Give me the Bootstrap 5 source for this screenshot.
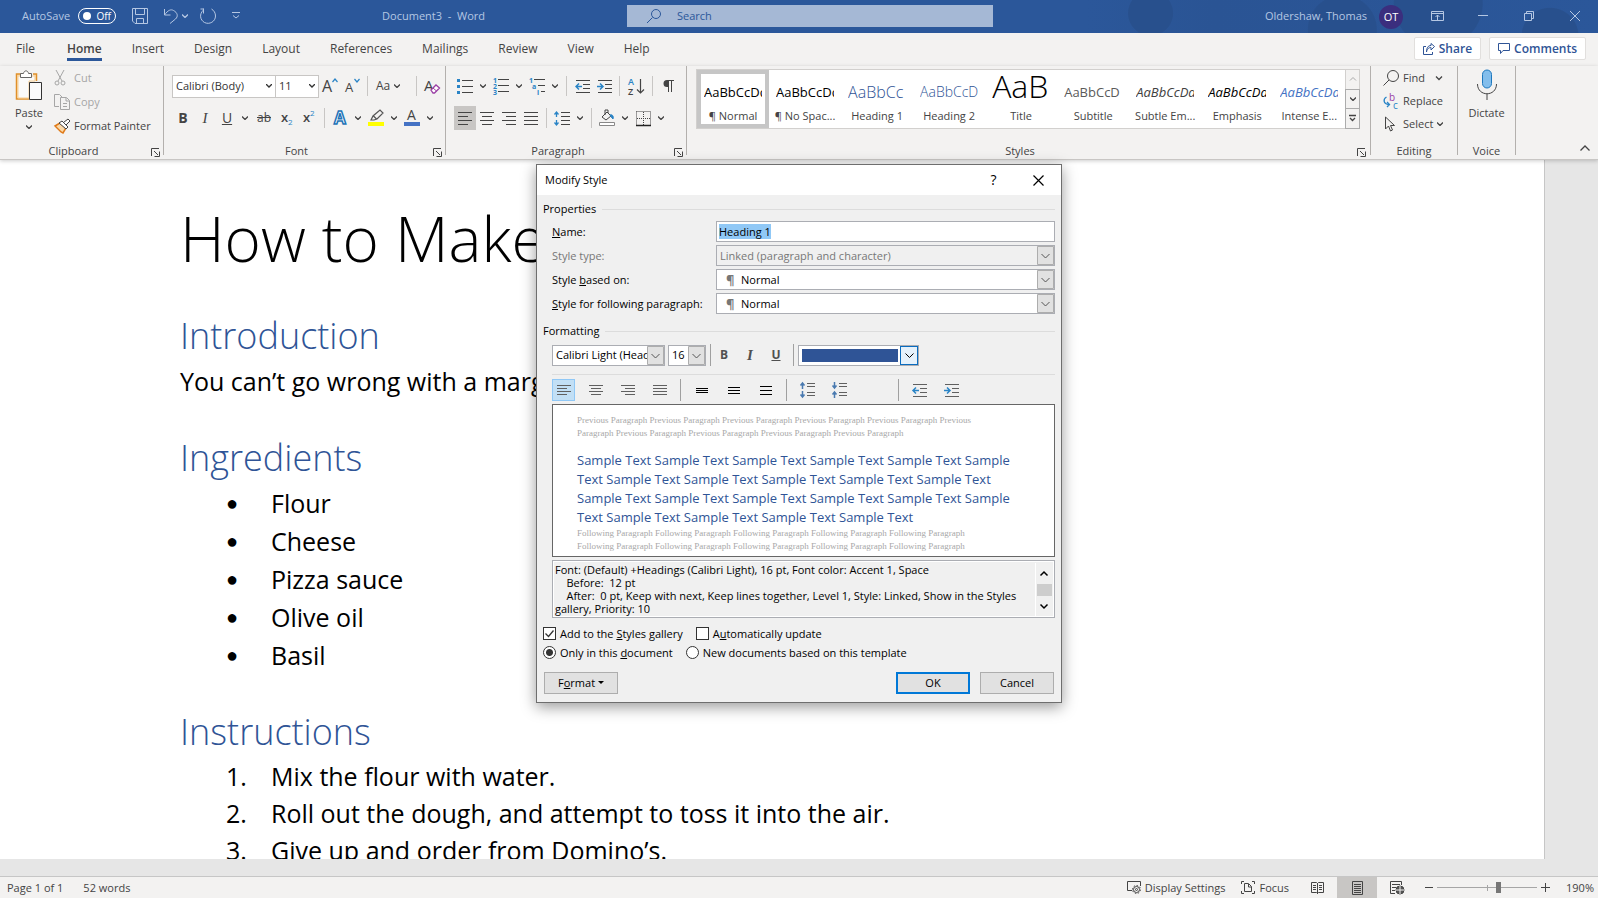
<!DOCTYPE html>
<html lang="en">
<head>
<meta charset="utf-8">
<meta name="viewport" content="width=device-width, initial-scale=1">
<title>Document3 - Word</title>
<link href="https://cdn.jsdelivr.net/npm/bootstrap@5.3.0/dist/css/bootstrap.min.css" rel="stylesheet">
<style>
:root{--ui:"Open Sans","Noto Sans",sans-serif;--ink:#444;--word:#2b579a;--accent:#2f5496}
body{font-family:var(--ui);font-size:11px;line-height:16px;color:var(--ink);background:#e6e6e6;overflow:hidden}
svg{display:block;flex:none;overflow:visible}
button,select,input{font-family:inherit;font-size:inherit;line-height:inherit;color:inherit}
button{border:0;background:none;padding:0}
svg text{font-family:var(--ui)}
.ln{fill:none;stroke:currentColor}
/* title bar */
.titlebar{height:33px;padding-bottom:2px;color:#b5c7e3;background:
 radial-gradient(circle at 72% 40%,#28508d 0 22px,transparent 23px),
 radial-gradient(circle at 84% 90%,#28508d 0 34px,transparent 35px),
 radial-gradient(circle at 90% 10%,#28508d 0 44px,transparent 45px),
 radial-gradient(circle at 97% 110%,#28508d 0 28px,transparent 29px),
 linear-gradient(90deg,#2b579a 68%,#2a5494 76%,#2b579a)}
.side{flex:1 1 0}
.side.lead-side{flex-basis:20px;padding-left:22px}
.toggle{width:38px;height:16px;border:1px solid #fff;border-radius:8px;color:#fff;font-size:10px;line-height:14px}
.toggle i{width:8px;height:8px;border-radius:50%;background:#fff}
.search{width:366px;height:22px;background:#a5b8d5;color:#2b579a}
.search input{background:none;border:0;outline:0;color:#2b579a}
.search input::placeholder{color:#2b579a;opacity:1}
.avatar{width:24px;height:24px;border-radius:50%;background:#3b2e7e;color:#fff;margin:2px 11px 0 0}
.winbtn{width:46px;height:30px}
/* tabs */
.tabs{height:33px;background:#f3f2f1;font-size:12px}
.tabset{gap:30px}
.tabs a{color:var(--ink);text-decoration:none;height:28px;line-height:31px;border-bottom:3px solid transparent}
.tabs a:first-child{padding-right:2px}
.tabs a.on{font-weight:600;border-color:var(--word)}
.pill{height:23px;background:#fff;border:1px solid #e1dfdd;border-radius:2px;color:var(--accent);font-weight:600;padding:0 8px}
/* ribbon */
.ribbon{height:94px;background:#f3f2f1;border-bottom:1px solid #c8c6c4;box-shadow:0 1px 4px rgba(0,0,0,.2);position:relative}
.grp{border-right:1px solid #b3b0ad;height:89px;flex:none}
.g-clip{width:164px}.g-font{width:282px}.g-para{width:241px}.g-edit{width:87px}.g-voice{width:58px}
.g-styles{flex:1 1 0;padding:3px 10px 0 9px;min-width:0}
.cap{height:16px;margin-top:auto;margin-bottom:-4px}
.cap .launch{position:absolute;right:3px;top:5px}
.g-styles .launch{right:-6px}
.ib{height:24px;width:22px;display:flex;align-items:center;justify-content:center}
.ib.wide{width:24px;font-size:12px}
.ib.pressed{background:#c8c6c4}
.ib.bigt{font-size:14px}
.slant{font-family:"Liberation Serif",serif;font-style:italic;font-size:15px}
.cv{width:14px;height:24px;display:flex;align-items:center;justify-content:center}
.vs{width:1px;height:20px;background:#c8c6c4;margin:0 4px}
.combo{height:23px;border:1px solid #c8c6c4;border-radius:0;background:#fff url("data:image/svg+xml,%3Csvg xmlns='http://www.w3.org/2000/svg' width='6' height='4'%3E%3Cpath d='M0 0l3 3 3-3' fill='none' stroke='%23333' stroke-width='1.3'/%3E%3C/svg%3E") no-repeat right 3px center;appearance:none;padding:0 3px;color:#333}
.c-face{width:104px}.c-size{width:44px;margin-left:-1px}
.gallery{height:60px;background:#fff;border:1px solid #d2d0ce;border-right:0;min-width:0}
.sty{flex:1 1 0;min-width:0;height:58px;padding:0 3px;border:4px solid transparent;display:block;text-align:center;white-space:nowrap}
.sty.on{border-color:#c6c6c6}
.sty b{display:block;font-weight:400;height:28px;line-height:34px;overflow:hidden;color:#000;font-size:13px;text-align:left}
.sty span{display:block;margin:5px -5px 0}
.sty .h1s{color:var(--accent);font-size:16px;font-weight:300}
.sty .h2s{color:var(--accent);font-size:14px;font-weight:300}
.sty .ttl{font-size:32px;font-weight:300;line-height:22px}
.sty .subt{color:#5a5a5a}
.sty .sube{color:#404040}
.sty .inte{color:#4472c4}
.gscroll{width:15px}
.gscroll button{flex:1;border:1px solid #acacac;margin-top:-1px;display:flex;align-items:center;justify-content:center}
.gscroll button:first-child{border-color:#d2d0ce;color:#aaa;margin-top:0}
.row24{height:24px}.row23{height:23px}
.rowgap{margin-top:8px}
.paste{width:26px}
.mic{margin:3px 0 4px}
.tail{width:82px;flex:none}
.dim{color:#a6a6a6}
/* document */
.canvas{flex:1;min-height:0;margin-bottom:17px;overflow:hidden}
.sheet{background:#fff;border-right:1px solid #c6c6c6;margin-right:53px;height:100%;overflow:hidden;padding:40px 40px 0 180px;color:#000;font-size:25px}
.sheet h1{font-size:62px;line-height:76px;font-weight:300;margin:0}
.sheet h2{font-size:36px;line-height:48px;font-weight:300;color:var(--accent);margin:34px 0 0}
.sheet h1+h2{margin-top:36px}
.sheet p{line-height:38px;margin:2px 0 0;white-space:nowrap}
.sheet ul,.sheet ol{list-style:none;padding:0 0 0 46px;margin:2px 0 0;line-height:38px}
.sheet li{display:flex}
.sheet li::before{width:45px;flex:none}
.sheet ul li::before{content:"●";font-size:20px}
.sheet ol{counter-reset:n;line-height:37px}
.sheet ol li::before{counter-increment:n;content:counter(n) "."}
/* status bar */
.status{height:22px;background:#f3f2f1;border-top:1px solid #c6c6c6;padding-left:7px}
.view{width:40px;height:21px;display:flex;align-items:center;justify-content:center}
.view.on{background:#c8c6c4}
.zoom{appearance:none;width:100px;height:14px;background:linear-gradient(#a6a6a6,#a6a6a6) center/100% 1px no-repeat,linear-gradient(#a6a6a6,#a6a6a6) center/1px 6px no-repeat}
.zoom::-webkit-slider-thumb{appearance:none;width:5px;height:11px;background:#777}
/* dialog */
.dlg{position:absolute;top:164px;left:0;right:0;margin:0 auto;width:526px;border:1px solid #6e6e6e;background:#f0f0f0;color:#000;box-shadow:0 4px 14px rgba(0,0,0,.4)}
.dlg-head{height:30px;background:#fff;padding-left:8px}
.dlg-head .hb{width:45px;height:28px;display:flex;align-items:center;justify-content:center;font-size:14px}
.dlg-body{padding:5px 6px 8px}
.sect{height:18px;margin-bottom:3px}
.sect::after{content:"";flex:1;height:1px;background:#dcdcdc;margin-left:6px}
.inset{padding-left:9px}
.frow{height:21px;margin-bottom:3px}
.frow label{width:164px;white-space:nowrap}
.frow .off{color:#777}
.fld{height:21px;border:1px solid #abadb3;border-radius:0;background:#fff;padding:0 2px;width:100%;outline:0}
.fld::selection{background:#90c8f6;color:#000}
.sel{appearance:none;height:21px;width:100%;border:1px solid #abadb3;border-radius:0;padding:0 17px 0 3px;background:#fff url("data:image/svg+xml,%3Csvg xmlns='http://www.w3.org/2000/svg' width='17' height='19'%3E%3Cpath d='M.5.5h16v18H.5z' fill='%23e1e1e1' stroke='%23adadad'/%3E%3Cpath d='M4.500 8l4 4 4-4' fill='none' stroke='%23555'/%3E%3C/svg%3E") no-repeat right center}
.sel:disabled{background-color:#f0f0f0;color:#777;opacity:1}
.sel.para{padding-left:24px}
.pil{position:absolute;left:10px;top:3px;color:#777;font-size:13px;font-weight:700;pointer-events:none}
.s-face{width:113px;margin-right:3px}.s-size{width:38px}
.cbox{width:121px;height:21px;border:1px solid #abadb3;background:#fff;padding:3px 0 3px 3px;display:flex}
.cbox i{width:96px;background:#2f5496}
.cbox u{width:18px;margin:-3px 0 -3px auto;border:1px solid #0a6cbf;background:#e5f1fb;display:flex;align-items:center;justify-content:center}
.ds{width:1px;height:22px;background:#a0a0a0}
.db{width:23px;height:22px;display:flex;align-items:center;justify-content:center;color:#606060}
.db.tx{width:26px;font-size:12px;font-weight:700;color:#505050}
.db.tx.slant{font-size:15px}
.db.on{background:#c2dff5;border:1px solid #90c8f6}
.parow{gap:9px;margin-bottom:3px}
.farsep{margin-left:38px}
.rule{height:1px;background:#dcdcdc}
.prev{height:153px;border:1px solid #666;background:#fff;overflow:hidden;padding:9px 24px 0}
.prev div{white-space:nowrap}
.ghost{font:9px/13px "Liberation Serif",serif;color:#a8a8a8}
.samp{font-size:13px;line-height:19px;padding-top:11px;color:var(--accent)}
.desc{height:58px;margin-top:3px;border:1px solid #abadb3;box-shadow:inset 0 0 0 1px #fff;line-height:13px;padding:2px 2px 0 2px;white-space:pre}
.sbar{width:17px;border-left:1px solid #fff}
.sbar i{width:15px;height:17px;background:#cdcdcd}
.chk{appearance:none;width:13px;height:13px;border:1px solid #333;background:#fff;margin:0 4px 0 0;flex:none}
.chk:checked{background:#fff url("data:image/svg+xml,%3Csvg xmlns='http://www.w3.org/2000/svg' width='11' height='11'%3E%3Cpath d='M1.500 5.500l3 3 5-6' fill='none' stroke='%23333' stroke-width='1.300'/%3E%3C/svg%3E")}
.chk.rd{border-radius:50%}
.chk.rd:checked{background:radial-gradient(circle,#333 0 3px,#fff 4px)}
.opts{margin:6px 0}
.opt{height:19px;margin-right:13px}
.acts{padding:4px 1px 0;gap:10px}
.pb{height:22px;width:74px;background:#e1e1e1;border:1px solid #adadad}
.pb.main{border:2px solid #0078d7}
</style>
</head>
<body>
<svg width="0" height="0" class="position-absolute" aria-hidden="true">
<symbol id="cv" viewBox="0 0 6 4"><path class="ln" d="M0 .5l3 3 3-3" stroke-width="1.300"/></symbol>
<symbol id="launch" viewBox="0 0 9 9"><path class="ln" d="M.5 8V.5H8M3 3l4 4M8.500 3.500v5h-5" /></symbol>
<symbol id="al" viewBox="0 0 14 13"><path class="ln" d="M0 .5h14M0 4.500h10M0 8.500h14M0 12.500h10"/></symbol>
<symbol id="ac" viewBox="0 0 14 13"><path class="ln" d="M0 .5h14M2 4.500h10M0 8.500h14M2 12.500h10"/></symbol>
<symbol id="ar" viewBox="0 0 14 13"><path class="ln" d="M0 .5h14M4 4.500h10M0 8.500h14M4 12.500h10"/></symbol>
<symbol id="aj" viewBox="0 0 14 13"><path class="ln" d="M0 .5h14M0 4.500h14M0 8.500h14M0 12.500h14"/></symbol>
<symbol id="outd" viewBox="0 0 15 13"><path class="ln" d="M1 .5h14M8 4.500h7M8 8.500h7M1 12.500h14"/><path d="M7 6.500H1.500M4 3.500l-3 3 3 3" fill="none" stroke="#2a84c6" stroke-width="1.500"/></symbol>
<symbol id="ind" viewBox="0 0 15 13"><path class="ln" d="M1 .5h14M8 4.500h7M8 8.500h7M1 12.500h14"/><path d="M0 6.500h5.500M3 3.500l3 3-3 3" fill="none" stroke="#2a84c6" stroke-width="1.500"/></symbol>
</svg>
<div class="d-flex flex-column vh-100">
<header class="titlebar d-flex align-items-center">
 <div class="side lead-side d-flex align-items-center">
  <span class="me-2">AutoSave</span>
  <button class="toggle d-flex align-items-center justify-content-between px-1"><i></i>Off</button>
  <button class="ms-3" aria-label="Save"><svg width="16" height="16"><path class="ln" d="M.5.5h15v15H3L.5 13zM3.500.5v6h9v-6M4.500 15.500v-5h7v5"/></svg></button>
  <button class="ms-3" aria-label="Undo"><svg width="14" height="16"><path class="ln" d="M.5 1v6h6M.5 7C4 2 7 1 9.500 2.500c4 2 5 6 2 8.500L6 15.500"/></svg></button>
  <svg class="ms-1" width="6" height="4"><use href="#cv"/></svg>
  <button class="ms-2 ps-1" aria-label="Redo"><svg width="16" height="16"><path class="ln" d="M3.500 1h-3M3.500.5v5M3.500 2C-1 6 0 12 4.500 14.500c5 2.500 11-1 11-6.500 0-3-1.500-5.500-4-7"/></svg></button>
  <svg class="ms-3" width="8" height="7"><path class="ln" d="M0 .5h8M1 3.500l3 2.500 3-2.500"/></svg>
  <span class="mx-auto ps-4">Document3&nbsp; -&nbsp; Word</span><span class="ps-4"></span>
 </div>
 <label class="search d-flex align-items-center ps-3 gap-3"><svg class="ms-1" width="14" height="14"><circle class="ln" cx="9" cy="5" r="4.500"/><path class="ln" d="M5.500 8.500L0 14"/></svg><input class="flex-grow-1 p-0" type="search" placeholder="Search"></label>
 <div class="side d-flex align-items-center justify-content-end">
  <span class="me-2 pe-1">Oldershaw, Thomas</span>
  <span class="avatar d-flex align-items-center justify-content-center">OT</span>
  <button class="winbtn d-flex align-items-center justify-content-center" aria-label="Ribbon display"><svg width="13" height="10"><path class="ln" d="M.5.5h12v9H.5zM.5 2.500h12M6.500 9V4M4.500 6l2-2 2 2"/></svg></button>
  <button class="winbtn d-flex align-items-center justify-content-center" aria-label="Minimize"><svg width="10" height="1"><path class="ln" d="M0 .5h10"/></svg></button>
  <button class="winbtn d-flex align-items-center justify-content-center" aria-label="Restore"><svg width="10" height="10"><path class="ln" d="M.5 2.500h7v7h-7zM2.500 2.500v-2h7v7h-2"/></svg></button>
  <button class="winbtn d-flex align-items-center justify-content-center" aria-label="Close"><svg width="10" height="10"><path class="ln" d="M0 0l10 10M10 0L0 10"/></svg></button>
 </div>
</header>
<nav class="tabs d-flex align-items-start ps-3 pe-2">
 <div class="tabset d-flex">
 <a href="#">File</a><a href="#" class="on">Home</a><a href="#">Insert</a><a href="#">Design</a><a href="#">Layout</a><a href="#">References</a><a href="#">Mailings</a><a href="#">Review</a><a href="#">View</a><a href="#">Help</a>
 </div>
 <div class="ms-auto d-flex gap-2 pt-1 pe-1">
  <button class="pill d-flex align-items-center gap-1"><svg width="12" height="12"><path class="ln" d="M3 3.500H.5v8h9V9M3.500 9C4 5.500 6 4.500 8 4.500V7l3.500-3.500L8 .5v2C5 2.500 3.500 5 3.500 9z"/></svg>Share</button>
  <button class="pill d-flex align-items-center gap-1"><svg width="12" height="11"><path class="ln" d="M.5.5h11v7H5l-2.500 3v-3h-2z"/></svg>Comments</button>
 </div>
</nav>
<section class="ribbon d-flex">
 <div class="grp g-clip d-flex flex-column">
  <div class="d-flex ps-3">
   <button class="paste d-flex flex-column align-items-center me-2"><svg class="mt-1" width="28" height="31"><path d="M8 4H1.500v25H14M21 4h-1M18 4h3.500v7" fill="#fbe3bd" stroke="#e0902a" stroke-width="1.500"/><path d="M3 6h17v5h-6v17H3z" fill="#fafafa" stroke="#f7cf94"/><path d="M5.500 7.500v-4h3C9 0 13 0 13.500 3.500h3v4z" fill="#fff" stroke="#666"/><path d="M14.500 12.500h12v17h-12z" fill="#fafafa" stroke="#333"/></svg><span class="mt-1">Paste</span><svg class="mt-1" width="6" height="4"><use href="#cv"/></svg></button>
   <div class="ms-1">
    <button class="row24 d-flex align-items-center dim"><svg width="12" height="16"><path class="ln" d="M2 0l6 11M10 0L4 11"/><circle class="ln" cx="3" cy="13" r="2"/><circle class="ln" cx="9" cy="13" r="2"/></svg><span class="ps-1 ms-1">Cut</span></button>
    <button class="row24 d-flex align-items-center dim"><svg class="me-1" width="16" height="16"><path class="ln" d="M5 12.500H.5V.5h5l3 3M6.500 3.500h6l3 3v9h-9zM12 4v3h3M9 9.500h4M9 12.500h4"/></svg>Copy</button>
    <button class="row24 d-flex align-items-center text-nowrap"><svg class="me-1" width="16" height="15"><path d="M1 7l5-3 6 5-3 5-2-1z" fill="#fbd9a8" stroke="#e07b1a" stroke-width="1.500"/><path d="M5 4l3-2 6 6-2 2zM9.500 3.500L14 0l2 2-4 4" fill="#fff" stroke="#444"/></svg>Format Painter</button>
   </div>
  </div>
  <div class="cap position-relative text-center pe-3">Clipboard<svg class="launch" width="9" height="9"><use href="#launch"/></svg></div>
 </div>
 <div class="grp g-font d-flex flex-column ps-2">
  <div class="d-flex align-items-center rowgap">
   <select class="combo c-face" aria-label="Font"><option>Calibri (Body)</option></select><select class="combo c-size" aria-label="Font size"><option>11</option></select>
   <button class="ib" aria-label="Grow font"><svg width="16" height="16"><text x="0" y="14" font-size="16" fill="#444">A</text><path d="M10.500 4l2.500-3 2.500 3" fill="none" stroke="#2a84c6" stroke-width="1.200"/></svg></button>
   <button class="ib" aria-label="Shrink font"><svg width="14" height="16"><text x="0" y="14" font-size="13" fill="#444">A</text><path d="M9.500 1l2.500 3 2.500-3" fill="none" stroke="#2a84c6" stroke-width="1.200"/></svg></button>
   <span class="vs"></span>
   <button class="gap-1 ib wide ms-1">Aa<svg width="6" height="4"><use href="#cv"/></svg></button>
   <span class="vs ms-3"></span>
   <button class="ib" aria-label="Clear formatting"><svg width="16" height="16"><text x="0" y="13" font-size="15" fill="#444">A</text><path d="M7 12l5-5 3.500 3-5 5H9z" fill="#fff" stroke="#9a3fa5" stroke-width="1.300"/><path d="M9 10l3.500 3" stroke="#9a3fa5"/></svg></button>
  </div>
  <div class="d-flex align-items-center rowgap">
   <button class="ib fw-bold bigt">B</button>
   <button class="ib slant">I</button>
   <button class="ib text-decoration-underline bigt">U</button>
   <button class="cv" aria-label="Underline style"><svg width="6" height="4"><use href="#cv"/></svg></button>
   <button class="ib wide text-decoration-line-through">ab</button>
   <button class="ib" aria-label="Subscript"><svg width="12" height="16"><text x="0" y="12" font-size="13" font-weight="600" fill="#444">x</text><text x="7" y="15" font-size="8" fill="#2a84c6">2</text></svg></button>
   <button class="ib" aria-label="Superscript"><svg width="12" height="16"><text x="0" y="12" font-size="13" font-weight="600" fill="#444">x</text><text x="7" y="6" font-size="8" fill="#2a84c6">2</text></svg></button>
   <span class="vs"></span>
   <button class="ib" aria-label="Text effects"><svg width="16" height="16"><text x="2" y="14" font-size="17" font-weight="700" fill="#fff" stroke="#1f74b8" stroke-width="1.500">A</text></svg></button>
   <button class="cv" aria-label="More effects"><svg width="6" height="4"><use href="#cv"/></svg></button>
   <button class="ib" aria-label="Highlight"><svg width="16" height="16"><path d="M0 12h16v4H0z" fill="#ff0"/><path d="M3 10l2-4 7-6 3 3-6 6-3 1zM5.500 6l3 3" fill="#f3f2f1" stroke="#555" stroke-width="1.200"/></svg></button>
   <button class="cv" aria-label="Highlight colors"><svg width="6" height="4"><use href="#cv"/></svg></button>
   <button class="ib" aria-label="Font color"><svg width="16" height="16"><text x="3" y="10" font-size="14" fill="#444">A</text><path d="M0 12h16v4H0z" fill="#4472c4"/></svg></button>
   <button class="cv" aria-label="Font colors"><svg width="6" height="4"><use href="#cv"/></svg></button>
  </div>
  <div class="cap position-relative text-center pe-4">Font<svg class="launch" width="9" height="9"><use href="#launch"/></svg></div>
 </div>
 <div class="grp g-para d-flex flex-column ps-2">
  <div class="d-flex align-items-center rowgap">
   <button class="ib" aria-label="Bullets"><svg width="16" height="15"><path d="M0 0h3v3H0zM0 6h3v3H0zM0 12h3v3H0z" fill="#2a84c6"/><path class="ln" d="M5 1.500h11M5 7.500h11M5 13.500h11"/></svg></button>
   <button class="cv" aria-label="Bullet styles"><svg width="6" height="4"><use href="#cv"/></svg></button>
   <button class="ib" aria-label="Numbering"><svg width="16" height="16"><g fill="#2a84c6" font-size="7" font-weight="700"><text x="0" y="5">1</text><text x="0" y="11">2</text><text x="0" y="17">3</text></g><path class="ln" d="M5 1.500h11M5 7.500h11M5 13.500h11"/></svg></button>
   <button class="cv" aria-label="Number styles"><svg width="6" height="4"><use href="#cv"/></svg></button>
   <button class="ib" aria-label="Multilevel list"><svg width="16" height="16"><g fill="#2a84c6" font-size="7" font-weight="700"><text x="0" y="5">1</text><text x="3" y="11">a</text><text x="8" y="17">i</text></g><path class="ln" d="M5 1.500h11M9 7.500h7M12 13.500h4"/></svg></button>
   <button class="cv" aria-label="List styles"><svg width="6" height="4"><use href="#cv"/></svg></button>
   <span class="vs"></span>
   <button class="ib" aria-label="Decrease indent"><svg width="15" height="13"><use href="#outd"/></svg></button>
   <button class="ib" aria-label="Increase indent"><svg width="15" height="13"><use href="#ind"/></svg></button>
   <span class="vs"></span>
   <button class="ib wide" aria-label="Sort"><svg width="16" height="17"><text x="0" y="7" font-size="9" font-weight="600" fill="#2a84c6">A</text><text x="0" y="17" font-size="9" font-weight="600" fill="#444">Z</text><path class="ln" d="M12.500 1v14M9 11.500l3.500 3.500 3.500-3.500" stroke-width="1.200"/></svg></button>
   <span class="vs"></span>
   <button class="ib" aria-label="Show marks"><svg width="11" height="12"><path d="M4 0a3.500 3.500 0 000 7h1v5h1V1h2v11h1V1h2V0z" fill="#444"/></svg></button>
  </div>
  <div class="d-flex align-items-center rowgap">
   <button class="ib pressed" aria-label="Align left"><svg width="14" height="13"><use href="#al"/></svg></button>
   <button class="ib" aria-label="Center"><svg width="14" height="13"><use href="#ac"/></svg></button>
   <button class="ib" aria-label="Align right"><svg width="14" height="13"><use href="#ar"/></svg></button>
   <button class="ib" aria-label="Justify"><svg width="14" height="13"><use href="#aj"/></svg></button>
   <span class="vs"></span>
   <button class="ib" aria-label="Line spacing"><svg width="16" height="15"><path d="M2.500 1v5M2.500 9v5M.5 3.500l2-2.500 2 2.500M.5 11.500l2 2.500 2-2.500" fill="none" stroke="#2a84c6" stroke-width="1.300"/><path class="ln" d="M7 1.500h9M7 5.500h9M7 9.500h9M7 13.500h9"/></svg></button>
   <button class="cv" aria-label="Spacing options"><svg width="6" height="4"><use href="#cv"/></svg></button>
   <span class="vs"></span>
   <button class="ib" aria-label="Shading"><svg width="16" height="16"><path class="ln" d="M3 7l5-5 4 4-5 4zM6 5V0h3v3"/><path d="M11 5c2-1 4 1 3 4l-1-1z" fill="#2a84c6" stroke="#2a84c6"/><path d="M.5 12.500h15v3H.5z" fill="#fff" stroke="#888"/></svg></button>
   <button class="cv" aria-label="Shading colors"><svg width="6" height="4"><use href="#cv"/></svg></button>
   <button class="ib" aria-label="Borders"><svg width="15" height="15"><path class="ln" d="M.5.5h14v14M.5.5v14M7.500 1v13M1 7.500h13" stroke-dasharray="1 1"/><path d="M0 14.500h15" stroke="#222" stroke-width="1.500"/></svg></button>
   <button class="cv" aria-label="Border styles"><svg width="6" height="4"><use href="#cv"/></svg></button>
  </div>
  <div class="cap position-relative text-center pe-4">Paragraph<svg class="launch" width="9" height="9"><use href="#launch"/></svg></div>
 </div>
 <div class="grp g-styles d-flex flex-column">
  <div class="d-flex">
   <div class="gallery d-flex flex-grow-1">
    <button class="sty on"><b>AaBbCcDd</b><span>¶ Normal</span></button>
    <button class="sty"><b>AaBbCcDd</b><span>¶ No Spac...</span></button>
    <button class="sty"><b class="h1s">AaBbCc</b><span>Heading 1</span></button>
    <button class="sty"><b class="h2s">AaBbCcD</b><span>Heading 2</span></button>
    <button class="sty"><b class="ttl">AaB</b><span>Title</span></button>
    <button class="sty"><b class="subt">AaBbCcD</b><span>Subtitle</span></button>
    <button class="sty"><b class="fst-italic sube">AaBbCcDd</b><span>Subtle Em...</span></button>
    <button class="sty"><b class="fst-italic">AaBbCcDd</b><span>Emphasis</span></button>
    <button class="sty"><b class="fst-italic inte">AaBbCcDd</b><span>Intense E...</span></button>
   </div>
   <div class="gscroll d-flex flex-column">
    <button aria-label="Scroll up"><svg width="6" height="4"><path class="ln" d="M0 3.500l3-3 3 3"/></svg></button>
    <button aria-label="Scroll down"><svg width="6" height="4"><use href="#cv"/></svg></button>
    <button aria-label="More styles"><svg width="7" height="7"><path class="ln" d="M0 .5h7M1 3l2.500 2.500L6 3" stroke-width="1.300"/></svg></button>
   </div>
  </div>
  <div class="cap position-relative text-center pe-3">Styles<svg class="launch" width="9" height="9"><use href="#launch"/></svg></div>
 </div>
 <div class="grp g-edit d-flex flex-column">
  <div class="ps-2 ms-1">
   <button class="row23 d-flex align-items-center"><svg class="me-1" width="16" height="16"><circle class="ln" cx="10" cy="6" r="5.500"/><path class="ln" d="M6 10l-5.500 5.500"/></svg>Find<svg class="ms-2" width="10" height="4"><path class="ln" d="M3 .5l3 3 3-3" stroke-width="1.300"/></svg></button>
   <button class="row23 d-flex align-items-center"><svg class="me-1" width="16" height="16"><text x="6" y="8" font-size="10" fill="#9a3fa5">b</text><text x="10" y="16" font-size="10" fill="#2a84c6">c</text><path d="M3.500 4C0 6 0 11 6 11.500M4 9l2.500 2.500L4 14" fill="none" stroke="#2a84c6" stroke-width="1.300"/></svg>Replace</button>
   <button class="row23 d-flex align-items-center"><svg class="me-1" width="16" height="16"><path class="ln" d="M2.500 1v12l3-3 2 5 2-1-2-4.500h4z"/></svg>Select<svg class="ms-1" width="6" height="4"><use href="#cv"/></svg></button>
  </div>
  <div class="cap text-center">Editing</div>
 </div>
 <div class="grp g-voice d-flex flex-column text-center">
  <button class="d-flex flex-column align-items-center"><svg class="mic" width="20" height="32"><path d="M5.500 5.500a4.500 4.500 0 019 0v9a4.500 4.500 0 01-9 0z" fill="#83beec" stroke="#1e78be"/><path class="ln" d="M.5 15c0 13 19 13 19 0M10 25v6"/></svg>Dictate</button>
  <div class="cap">Voice</div>
 </div>
 <div class="tail align-self-end text-end pe-2"><button aria-label="Collapse ribbon"><svg class="mb-1" width="10" height="6"><path class="ln" d="M.5 5.500L5 1l4.500 4.500" stroke-width="1.300"/></svg></button></div>
</section>
<main class="canvas">
 <article class="sheet">
  <h1>How to Make</h1>
  <h2>Introduction</h2>
  <p>You can’t go wrong with a marg</p>
  <h2>Ingredients</h2>
  <ul><li>Flour</li><li>Cheese</li><li>Pizza sauce</li><li>Olive oil</li><li>Basil</li></ul>
  <h2>Instructions</h2>
  <ol><li>Mix the flour with water.</li><li>Roll out the dough, and attempt to toss it into the air.</li><li>Give up and order from Domino’s.</li></ol>
 </article>
</main>
<footer class="status d-flex align-items-center">
 <span>Page 1 of 1</span><span class="ms-3 ps-1">52 words</span>
 <button class="ms-auto d-flex align-items-center gap-1 me-3"><svg width="14" height="13"><path class="ln" d="M5 9.500H.5V.5h13V5"/><circle class="ln" cx="9.500" cy="8.500" r="3"/><circle class="ln" cx="9.500" cy="8.500" r="1"/><path class="ln" stroke-dasharray="1.500 1.600" d="M5.500 8.500a4 4 0 018 0 4 4 0 01-8 0"/></svg>Display Settings</button>
 <button class="d-flex align-items-center gap-1 me-2"><svg width="14" height="13"><path class="ln" d="M3 .5H.5V3M.5 10v2.500H3M11 .5h2.500V3M13.500 10v2.500H11M3.500 2.500h4l3 3v5h-7zM7.500 3v3h3"/></svg>Focus</button>
 <button class="view" aria-label="Read mode"><svg width="13" height="12"><path class="ln" d="M.5.5h5l1 1 1-1h5v10h-5l-1 1-1-1h-5zM6.500 1v11M2 3.500h3M2 5.500h3M2 7.500h3M8 3.500h3M8 5.500h3M8 7.500h3"/></svg></button>
 <button class="view on" aria-label="Print layout"><svg width="11" height="14"><path class="ln" d="M.5.5h10v13H.5zM2 3.500h7M2 5.500h7M2 7.500h7M2 9.500h7M2 11.500h7" stroke="#222"/></svg></button>
 <button class="view" aria-label="Web layout"><svg width="14" height="14"><path class="ln" d="M5 12.500H.5V.5h11V4M2 3.500h8M2 6.500h4M2 9.500h3"/><circle cx="10" cy="9" r="4" fill="#555" stroke="#444"/><path d="M6 9h8M10 5v8" stroke="#f3f2f1"/></svg></button>
 <button class="ms-2" aria-label="Zoom out"><svg width="8" height="1"><path class="ln" d="M0 .5h8"/></svg></button>
 <input class="zoom mx-1" type="range" min="0" max="100" value="62" aria-label="Zoom">
 <button aria-label="Zoom in"><svg width="9" height="9"><path class="ln" d="M0 4.500h9M4.500 0v9"/></svg></button>
 <span class="ms-3 me-1">190%</span>
</footer>
</div>

<form class="dlg" role="dialog" aria-label="Modify Style">
 <div class="dlg-head d-flex align-items-center">Modify Style
  <button type="button" class="hb ms-auto" aria-label="Help">?</button>
  <button type="button" class="hb" aria-label="Close"><svg width="11" height="11"><path class="ln" d="M.5.5l10 10M10.500.5l-10 10" stroke-width="1.200"/></svg></button>
 </div>
 <div class="dlg-body">
  <div class="sect d-flex align-items-center">Properties</div>
  <div class="inset">
   <div class="frow d-flex align-items-center"><label for="nm"><u>N</u>ame:</label><div class="flex-grow-1"><input id="nm" class="fld" value="Heading 1"></div></div>
   <div class="frow d-flex align-items-center"><label for="ty" class="off">Style type:</label><div class="flex-grow-1"><select id="ty" class="sel" disabled><option>Linked (paragraph and character)</option></select></div></div>
   <div class="frow d-flex align-items-center"><label for="ba">Style <u>b</u>ased on:</label><div class="flex-grow-1 position-relative"><select id="ba" class="sel para"><option>Normal</option></select><span class="pil">¶</span></div></div>
   <div class="frow d-flex align-items-center"><label for="fo"><u>S</u>tyle for following paragraph:</label><div class="flex-grow-1 position-relative"><select id="fo" class="sel para"><option>Normal</option></select><span class="pil">¶</span></div></div>
  </div>
  <div class="sect d-flex align-items-center mt-2 mb-1">Formatting</div>
  <div class="inset">
   <div class="d-flex align-items-center mb-2">
    <select class="sel s-face" aria-label="Font"><option>Calibri Light (Headings)</option></select>
    <select class="sel s-size" aria-label="Size"><option>16</option></select>
    <span class="ds ms-1"></span>
    <button type="button" class="db tx">B</button>
    <button type="button" class="db tx slant">I</button>
    <button type="button" class="db tx text-decoration-underline">U</button>
    <span class="ds mx-1"></span>
    <button type="button" class="cbox" aria-label="Font color"><i></i><u><svg width="9" height="5"><path class="ln" d="M.5.5l4 4 4-4"/></svg></u></button>
   </div>
   <div class="rule mb-1"></div>
   <div class="parow d-flex align-items-center">
    <button type="button" class="db on" aria-label="Left"><svg width="14" height="11"><path class="ln" d="M0 .5h14M0 3.500h10M0 6.500h14M0 9.500h10"/></svg></button>
    <button type="button" class="db" aria-label="Center"><svg width="14" height="11"><path class="ln" d="M0 .5h14M2 3.500h10M0 6.500h14M2 9.500h10"/></svg></button>
    <button type="button" class="db" aria-label="Right"><svg width="14" height="11"><path class="ln" d="M0 .5h14M4 3.500h10M0 6.500h14M4 9.500h10"/></svg></button>
    <button type="button" class="db" aria-label="Justify"><svg width="14" height="11"><path class="ln" d="M0 .5h14M0 3.500h14M0 6.500h14M0 9.500h14"/></svg></button>
    <span class="ds"></span>
    <button type="button" class="db text-black" aria-label="Single"><svg width="12" height="9"><path class="ln" d="M0 2.500h12M0 4.500h12M0 6.500h12"/></svg></button>
    <button type="button" class="db text-black" aria-label="One and a half"><svg width="12" height="9"><path class="ln" d="M0 1.500h12M0 4.500h12M0 7.500h12"/></svg></button>
    <button type="button" class="db text-black" aria-label="Double"><svg width="12" height="9"><path class="ln" d="M0 .5h12M0 4.500h12M0 8.500h12"/></svg></button>
    <span class="ds"></span>
    <button type="button" class="db" aria-label="More space"><svg width="15" height="16"><path class="ln" d="M7 1.500h8M7 4.500h8M7 10.500h8M7 13.500h8"/><path d="M2.500 7V1.500M.5 3.500l2-2.500 2 2.500M2.500 9v5.500M.5 12.500l2 2.500 2-2.500" fill="none" stroke="#4a7ab0" stroke-width="1.500"/></svg></button>
    <button type="button" class="db" aria-label="Less space"><svg width="15" height="16"><path class="ln" d="M7 1.500h8M7 4.500h8M7 10.500h8M7 13.500h8"/><path d="M2.500 0v5.500M.5 3.500l2 2.500 2-2.500M2.500 16v-5.500M.5 12.500l2-2.500 2 2.500" fill="none" stroke="#4a7ab0" stroke-width="1.500"/></svg></button>
    <span class="ds farsep"></span>
    <button type="button" class="db" aria-label="Outdent"><svg width="17" height="13"><use href="#outd"/></svg></button>
    <button type="button" class="db" aria-label="Indent"><svg width="17" height="13"><use href="#ind"/></svg></button>
   </div>
   <div class="prev">
    <div class="ghost">Previous Paragraph Previous Paragraph Previous Paragraph Previous Paragraph Previous Paragraph Previous<br>Paragraph Previous Paragraph Previous Paragraph Previous Paragraph Previous Paragraph</div>
    <div class="samp">Sample Text Sample Text Sample Text Sample Text Sample Text Sample<br>Text Sample Text Sample Text Sample Text Sample Text Sample Text<br>Sample Text Sample Text Sample Text Sample Text Sample Text Sample<br>Text Sample Text Sample Text Sample Text Sample Text</div>
    <div class="ghost">Following Paragraph Following Paragraph Following Paragraph Following Paragraph Following Paragraph<br>Following Paragraph Following Paragraph Following Paragraph Following Paragraph Following Paragraph</div>
   </div>
   <div class="desc d-flex"><div class="flex-grow-1">Font: (Default) +Headings (Calibri Light), 16 pt, Font color: Accent 1, Space
    Before:  12 pt
    After:  0 pt, Keep with next, Keep lines together, Level 1, Style: Linked, Show in the Styles
gallery, Priority: 10</div><div class="sbar d-flex flex-column align-items-center"><svg class="my-2" width="8" height="5"><path class="ln" d="M.5 4.500L4 1l3.500 3.500" stroke-width="1.500"/></svg><i></i><svg class="my-2" width="8" height="5"><path class="ln" d="M.5.5L4 4 7.500.5" stroke-width="1.500"/></svg></div></div>
  </div>
  <div class="opts">
   <div class="d-flex">
    <label class="opt d-flex align-items-center"><input class="chk" type="checkbox" checked><span>Add to the <u>S</u>tyles gallery</span></label>
    <label class="opt d-flex align-items-center"><input class="chk" type="checkbox"><span>A<u>u</u>tomatically update</span></label>
   </div>
   <div class="d-flex">
    <label class="opt d-flex align-items-center"><input class="chk rd" type="radio" name="scope" checked><span>Only in this <u>d</u>ocument</span></label>
    <label class="opt d-flex align-items-center"><input class="chk rd" type="radio" name="scope"><span>New documents based on this template</span></label>
   </div>
  </div>
  <div class="acts d-flex">
   <button type="button" class="pb me-auto">F<u>o</u>rmat <svg class="d-inline-block mb-1" width="6" height="3"><path d="M0 0h6L3 3z"/></svg></button>
   <button type="submit" class="pb main">OK</button>
   <button type="button" class="pb">Cancel</button>
  </div>
 </div>
</form>
<script src="https://cdn.jsdelivr.net/npm/bootstrap@5.3.0/dist/js/bootstrap.bundle.min.js"></script>
<script>
const nameField = document.getElementById('nm');
nameField.focus();
nameField.select();
</script>
</body>
</html>
